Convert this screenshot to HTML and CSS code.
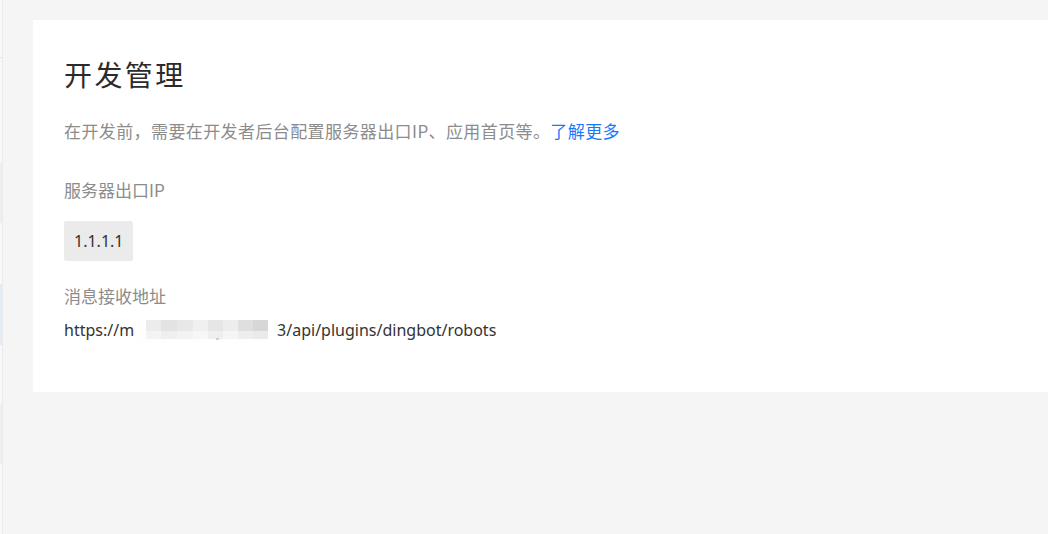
FILE: index.html
```html
<!DOCTYPE html>
<html lang="zh-CN">
<head>
<meta charset="utf-8">
<title>开发管理</title>
<link rel="stylesheet" href="styles.css">
</head>
<body>
<div class="layout">
  <aside class="sidebar">
    <div class="side-item s1"></div>
    <div class="side-item s2"></div>
    <div class="side-item s3"></div>
    <div class="side-item s4"></div>
  </aside>
  <main class="main">
    <section class="card">
      <h1 class="title">开发管理</h1>
      <p class="desc">在开发前，需要在开发者后台配置服务器出口IP、应用首页等。<a class="link" href="#">了解更多</a></p>
      <div class="label label-ip">服务器出口IP</div>
      <div class="tag">1.1.1.1</div>
      <div class="label label-msg">消息接收地址</div>
      <div class="url"><span>https://m</span><svg class="blur" width="143" height="24" viewBox="0 0 143 24"><rect x="0" y="0" width="143" height="24" fill="#fefefe"/><rect x="12" y="2" width="15" height="11" fill="#ececec"/><rect x="27" y="2" width="16" height="11" fill="#e3e3e3"/><rect x="43" y="2" width="16" height="11" fill="#e8e8e8"/><rect x="59" y="2" width="15" height="11" fill="#f0f0f0"/><rect x="74" y="2" width="15" height="11" fill="#e6e6e6"/><rect x="89" y="2" width="15" height="11" fill="#ededed"/><rect x="104" y="2" width="15" height="11" fill="#dfdfdf"/><rect x="119" y="2" width="15" height="11" fill="#d7d7d7"/><rect x="12" y="13" width="15" height="8" fill="#f4f4f4"/><rect x="27" y="13" width="16" height="8" fill="#efefef"/><rect x="43" y="13" width="16" height="8" fill="#f3f3f3"/><rect x="59" y="13" width="15" height="8" fill="#f7f7f7"/><rect x="74" y="13" width="15" height="8" fill="#efefef"/><rect x="89" y="13" width="15" height="8" fill="#f5f5f5"/><rect x="104" y="13" width="15" height="8" fill="#eeeeee"/><rect x="119" y="13" width="15" height="8" fill="#eaeaea"/><rect x="82" y="20" width="3" height="2" fill="#d0d0d0"/></svg><span>3/api/plugins/dingbot/robots</span></div>
    </section>
  </main>
</div>
</body>
</html>
```

FILE: styles.css
```css
html, body {
  margin: 0;
  padding: 0;
}

body {
  background: #f5f5f5;
  font-family: "Noto Sans CJK SC", "Noto Sans", sans-serif;
  width: 1048px;
  height: 534px;
  overflow: hidden;
}

.layout {
  display: flex;
  height: 534px;
}

.sidebar {
  width: 2px;
  flex: 0 0 2px;
  background: #f8f8f8;
  border-right: 1px solid #ebebeb;
  display: flex;
  flex-direction: column;
}

.side-item {
  flex: 0 0 auto;
}

.s1 {
  height: 57px;
  border-bottom: 1px solid #e6e6e6;
}

.s2 {
  margin-top: 105px;
  height: 60px;
  background: #eeeeee;
}

.s3 {
  margin-top: 61px;
  height: 61px;
  background: #e4ecf8;
}

.s4 {
  margin-top: 59px;
  height: 60px;
  background: #efefef;
}

.main {
  flex: 1 1 auto;
  padding: 20px 0 0 30px;
  min-width: 0;
}

.card {
  background: #ffffff;
  height: 372px;
  box-sizing: border-box;
  padding: 34px 31px 0;
  display: flex;
  flex-direction: column;
  align-items: flex-start;
}

.title {
  margin: 0;
  font-size: 28px;
  line-height: 40px;
  font-weight: 400;
  letter-spacing: 2.4px;
  color: #2b2b2b;
}

.desc {
  margin: 25px 0 0;
  font-size: 17px;
  line-height: 24px;
  letter-spacing: 0.4px;
  color: #8c8c8c;
}

.link {
  color: #1677ff;
  text-decoration: none;
}

.label {
  font-size: 17px;
  line-height: 24px;
  color: #8c8c8c;
}

.label-ip {
  margin-top: 35px;
}

.tag {
  margin-top: 19px;
  background: #ebebeb;
  border-radius: 2px;
  padding: 8px 10px;
  font-size: 16px;
  line-height: 24px;
  color: #333333;
  font-family: "Noto Sans", sans-serif;
}

.label-msg {
  margin-top: 23px;
}

.url {
  margin-top: 10px;
  font-size: 16px;
  line-height: 24px;
  color: #333333;
  font-family: "Noto Sans", sans-serif;
  display: flex;
  align-items: center;
}

.blur {
  display: block;
  flex: 0 0 auto;
}
```
